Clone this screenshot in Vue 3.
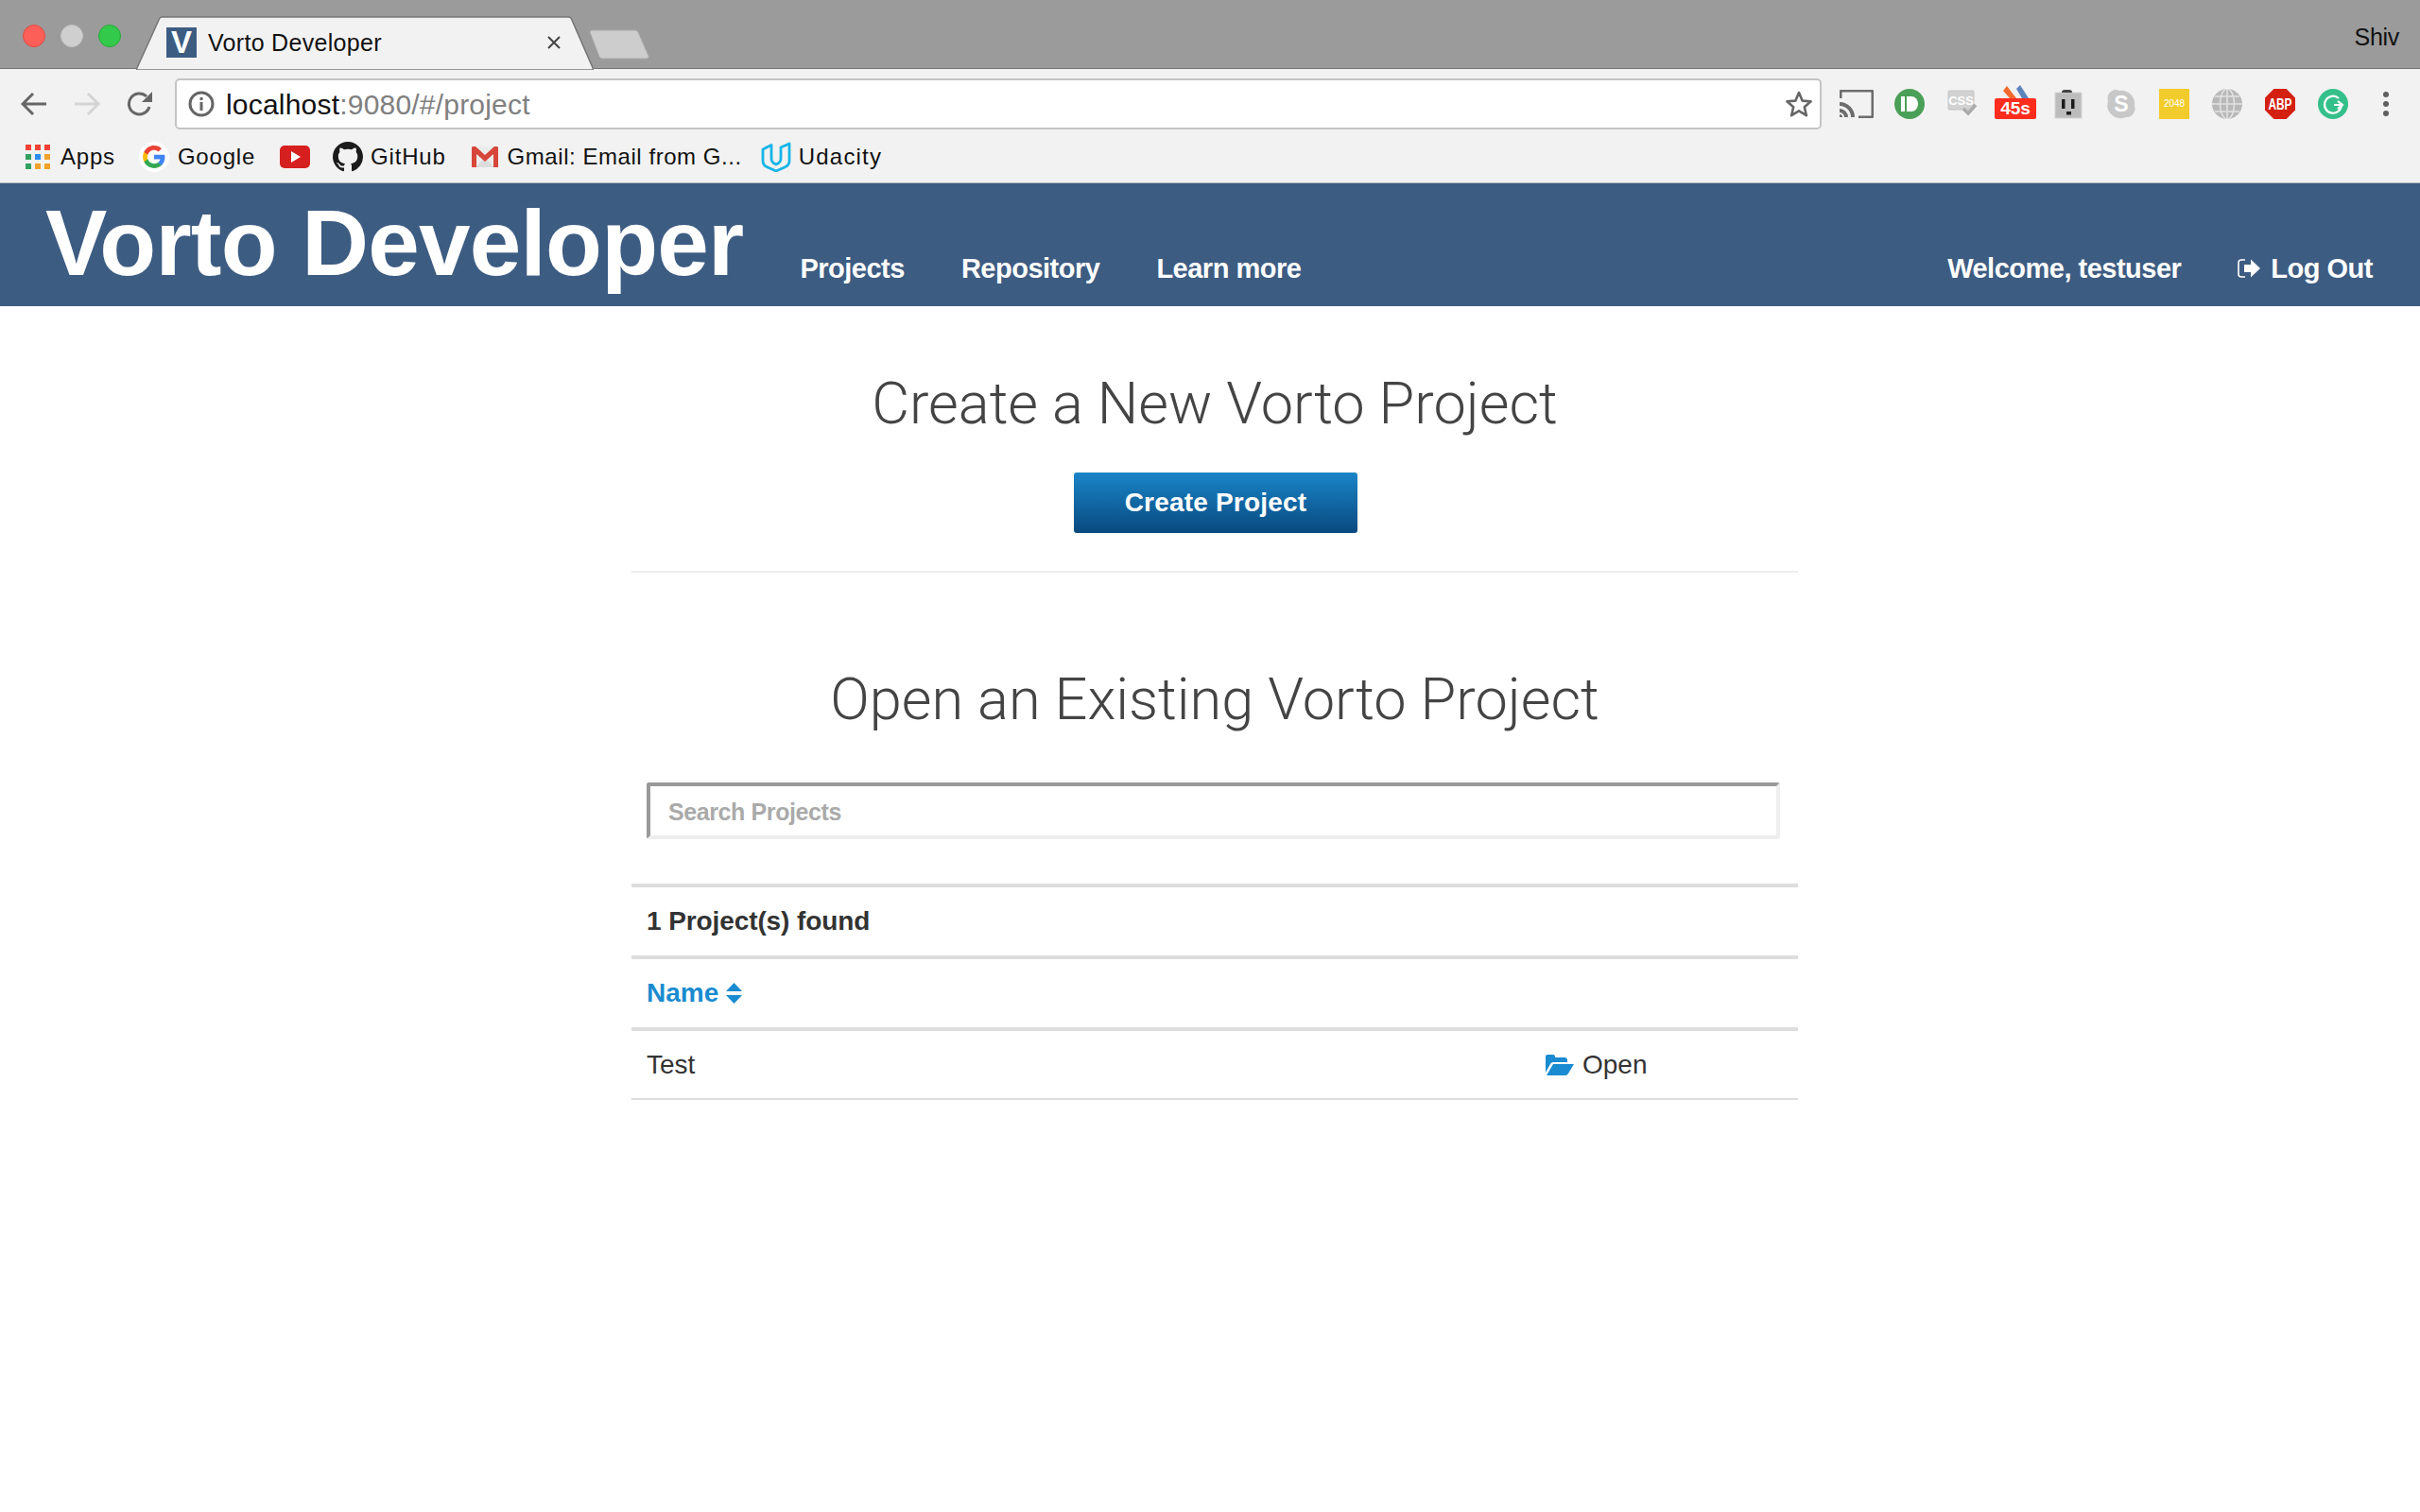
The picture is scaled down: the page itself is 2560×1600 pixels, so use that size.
<script setup>
const navLinks=['Projects','Repository','Learn more']
const projects=[{name:'Test'}]
</script>

<template>
  <div class="page">
    <div class="tabstrip">
      <div class="lights">
        <span class="light red"></span>
        <span class="light grey"></span>
        <span class="light green"></span>
      </div>
      <div class="tab">
        <svg class="tab_shape" width="484" height="57" viewBox="0 0 484 57">
          <path d="M0 57 L25 2 Q26 1 28 1 H457 Q459 1 460 2 L484 57 Z" fill="#f2f2f2" stroke="#777" stroke-width="1.5"/>
        </svg>
        <span class="favicon">V</span>
        <span class="tab_title">Vorto Developer</span>
        <svg class="tab_close" width="14" height="14" viewBox="0 0 14 14"><path d="M1 1 L13 13 M13 1 L1 13" stroke="#444" stroke-width="2"/></svg>
      </div>
      <svg class="newtab" width="66" height="32" viewBox="0 0 66 32">
        <path d="M2 3 Q2 1 4 1 H50 Q52 1 53 3 L64 28 Q65 31 62 31 H15 Q13 31 12 29 Z" fill="#cdcdcd" stroke="#aaa"/>
      </svg>
      <span class="profile">Shiv</span>
    </div>

    <div class="toolbar">
      <span class="slot">
        <svg width="28" height="26" viewBox="0 0 28 26"><path d="M27 13 H3 M13 2 L2 13 L13 24" fill="none" stroke="#666" stroke-width="3"/></svg>
      </span>
      <span class="slot">
        <svg width="28" height="26" viewBox="0 0 28 26"><path d="M1 13 H25 M15 2 L26 13 L15 24" fill="none" stroke="#d4d4d4" stroke-width="3"/></svg>
      </span>
      <span class="slot">
        <svg width="28" height="28" viewBox="0 0 28 28"><path d="M24 17 A11 11 0 1 1 21 6" fill="none" stroke="#666" stroke-width="3"/><path d="M27 1 V12 H16 Z" fill="#666"/></svg>
      </span>
      <div class="urlbox">
        <svg class="info" width="28" height="28" viewBox="0 0 28 28"><circle cx="14" cy="14" r="12" fill="none" stroke="#666" stroke-width="3"/><rect x="12.5" y="12" width="3" height="9" fill="#666"/><rect x="12.5" y="7" width="3" height="3" fill="#666"/></svg>
        <span class="url"><b>localhost</b>:9080/#/project</span>
        <svg class="star" width="30" height="30" viewBox="0 0 30 30"><path d="M15 3 L18.6 11.6 L27.6 12.3 L20.8 18.3 L22.9 27.2 L15 22.4 L7.100 27.2 L9.200 18.300 L2.400 12.300 L11.400 11.600 Z" fill="none" stroke="#666" stroke-width="2.600" stroke-linejoin="round"/></svg>
      </div>
      <div class="extensions">
        <span class="ext">
          <svg width="36" height="30" viewBox="0 0 36 30"><path d="M1 9 V3 Q1 1 3 1 H33 Q35 1 35 3 V27 Q35 29 33 29 H20" fill="none" stroke="#6d6d6d" stroke-width="3"/><path d="M0 13 A16 16 0 0 1 16 29 H12 A12 12 0 0 0 0 17 Z M0 20 A9 9 0 0 1 9 29 H5 A5 5 0 0 0 0 24 Z M0 26 A3 3 0 0 1 3 29 H0 Z" fill="#6d6d6d"/></svg>
        </span>
        <span class="ext">
          <svg width="32" height="32" viewBox="0 0 32 32"><circle cx="16" cy="16" r="16" fill="#4ba058"/><rect x="7" y="8" width="4" height="16" rx="0.500" fill="#fff"/><path d="M13 8 H18 A7 8 0 0 1 18 24 H13 Z" fill="#fff"/></svg>
        </span>
        <span class="ext">
          <svg width="32" height="30" viewBox="0 0 32 30"><path d="M1 2 Q1 1 2 1 H27 Q28 1 28 2 V20 Q28 21 27 21 H2 Q1 21 1 20 Z" fill="#d2d2d2" stroke="#c4c4c4"/><text x="14.500" y="16" class="svgtext" font-size="13" font-weight="700" fill="#fff" text-anchor="middle">CSS</text><path d="M17 20 L22 25 L30 16" fill="none" stroke="#aaa" stroke-width="3.500"/></svg>
        </span>
        <span class="ext">
          <svg width="46" height="42" viewBox="0 0 46 42"><path d="M10 7 L14 2 L24 15 H17 Z" fill="#f26a2e"/><path d="M24 5 L28 1 L37 15 H30 Z" fill="#5d83bd"/><rect x="1" y="15" width="44" height="22" rx="2" fill="#fd2d1e"/><text x="23" y="32" class="svgtext" font-size="19" font-weight="700" fill="#fff" text-anchor="middle">45s</text></svg>
        </span>
        <span class="ext">
          <svg width="30" height="32" viewBox="0 0 30 32"><rect x="1" y="4" width="28" height="27" fill="#bcbcbc" stroke="#d4d4d4"/><path d="M8 4 Q8 1 11 1 H16 Q19 1 19 4 Z" fill="#444"/><rect x="8" y="11" width="3.500" height="10" fill="#1c1c1c"/><rect x="18" y="11" width="3.500" height="10" fill="#1c1c1c"/><rect x="13" y="24" width="5" height="3.500" fill="#1c1c1c"/></svg>
        </span>
        <span class="ext">
          <svg width="32" height="32" viewBox="0 0 32 32"><path d="M10 1 A9 9 0 0 1 14 2 A14 14 0 0 1 30 18 A9 9 0 0 1 21 30 A14 14 0 0 1 2 13 A9 9 0 0 1 10 1 Z" fill="#c8c8c8"/><text x="16" y="24" class="svgtext" font-size="23" font-weight="700" fill="#fff" text-anchor="middle">S</text></svg>
        </span>
        <span class="ext">
          <span class="game">2048</span>
        </span>
        <span class="ext">
          <svg width="32" height="32" viewBox="0 0 32 32"><circle cx="16" cy="16" r="16" fill="#b9b9b9"/><g fill="none" stroke="#e2e2e2" stroke-width="1.500"><ellipse cx="16" cy="16" rx="7.500" ry="16"/><path d="M16 0 V32 M0 16 H32 M3 8 H29 M3 24 H29"/></g></svg>
        </span>
        <span class="ext">
          <svg width="32" height="32" viewBox="0 0 32 32"><path d="M9.400 0 H22.600 L32 9.400 V22.600 L22.600 32 H9.400 L0 22.600 V9.400 Z" fill="#d32011"/><text transform="translate(16 22) scale(.7 1)" class="svgtext" font-size="17" font-weight="700" fill="#fff" text-anchor="middle">ABP</text></svg>
        </span>
        <span class="ext">
          <svg width="32" height="32" viewBox="0 0 32 32"><circle cx="16" cy="16" r="16" fill="#35c08b"/><path d="M22 10 A9 9 0 1 0 25 17 H17" fill="none" stroke="#fff" stroke-width="2.200"/><path d="M21 13 L26 17 L21 21" fill="none" stroke="#fff" stroke-width="2.200"/></svg>
        </span>
        <span class="ext">
          <svg width="6" height="26" viewBox="0 0 6 26"><circle cx="3" cy="3" r="3" fill="#5f5f5f"/><circle cx="3" cy="13" r="3" fill="#5f5f5f"/><circle cx="3" cy="23" r="3" fill="#5f5f5f"/></svg>
        </span>
      </div>
    </div>

    <div class="bookmarks">
      <div class="mark">
        <svg width="26" height="26" viewBox="0 0 26 26">
          <rect width="6" height="6" fill="#f24236"/><rect x="10" width="6" height="6" fill="#f24236"/><rect x="20" width="6" height="6" fill="#f24236"/>
          <rect y="10" width="6" height="6" fill="#34a05f"/><rect x="10" y="10" width="6" height="6" fill="#2d8cf0"/><rect x="20" y="10" width="6" height="6" fill="#f2a22a"/>
          <rect y="20" width="6" height="6" fill="#34a05f"/><rect x="10" y="20" width="6" height="6" fill="#f2a22a"/><rect x="20" y="20" width="6" height="6" fill="#f2a22a"/>
        </svg>
        <span>Apps</span>
      </div>
      <div class="mark mark_goog">
        <span class="google">
          <svg width="26" height="26" viewBox="0 0 24 24">
            <path fill="#4285F4" d="M22.56 12.25c0-.78-.07-1.53-.2-2.25H12v4.26h5.92c-.26 1.37-1.04 2.53-2.21 3.31v2.77h3.57c2.08-1.92 3.28-4.74 3.28-8.09z"/>
            <path fill="#34A853" d="M12 23c2.97 0 5.46-.98 7.28-2.66l-3.57-2.77c-.98.66-2.23 1.06-3.71 1.06-2.86 0-5.29-1.93-6.16-4.53H2.18v2.84C3.99 20.53 7.7 23 12 23z"/>
            <path fill="#FBBC05" d="M5.84 14.09c-.22-.66-.35-1.36-.35-2.09s.13-1.43.35-2.09V7.07H2.18C1.43 8.55 1 10.22 1 12s.43 3.45 1.18 4.93l2.85-2.22.81-.62z"/>
            <path fill="#EA4335" d="M12 5.38c1.62 0 3.06.56 4.21 1.64l3.15-3.15C17.45 2.09 14.97 1 12 1 7.7 1 3.99 3.47 2.18 7.07l3.66 2.84c.87-2.6 3.3-4.53 6.16-4.53z"/>
          </svg>
        </span>
        <span>Google</span>
      </div>
      <div class="mark">
        <svg width="32" height="26" viewBox="0 0 32 26"><rect x="0" y="1" width="32" height="24" rx="5" fill="#d6201f"/><path d="M12 7 L22 13 L12 19 Z" fill="#fff"/></svg>
      </div>
      <div class="mark mark_git">
        <svg width="32" height="32" viewBox="0 0 16 16"><path fill="#1b1b1b" d="M8 0C3.58 0 0 3.58 0 8c0 3.54 2.29 6.53 5.47 7.59.4.07.55-.17.55-.38 0-.19-.01-.82-.01-1.49-2.01.37-2.53-.49-2.69-.94-.09-.23-.48-.94-.82-1.13-.28-.15-.68-.52-.01-.53.63-.01 1.08.58 1.23.82.72 1.21 1.87.87 2.33.66.07-.52.28-.87.51-1.07-1.78-.2-3.64-.89-3.64-3.95 0-.87.31-1.59.82-2.15-.08-.2-.36-1.02.08-2.12 0 0 .67-.21 2.2.82.64-.18 1.32-.27 2-.27.68 0 1.36.09 2 .27 1.53-1.04 2.2-.82 2.2-.82.44 1.1.16 1.92.08 2.12.51.56.82 1.27.82 2.15 0 3.07-1.87 3.75-3.65 3.95.29.25.54.73.54 1.48 0 1.07-.01 1.93-.01 2.2 0 .21.15.46.55.38A8.013 8.013 0 0016 8c0-4.42-3.58-8-8-8z"/></svg>
        <span>GitHub</span>
      </div>
      <div class="mark mark_gmail">
        <svg width="28" height="22" viewBox="0 0 28 22"><rect width="28" height="22" fill="#ececec"/><path d="M4 22 L14 12 L24 22 Z" fill="#dcdcdc"/><path d="M0 22 V1 Q0 0 2 0 H4 L14 9 L24 0 H26 Q28 0 28 1 V22 H23 V8 L14 16 L5 8 V22 Z" fill="#d7463a"/></svg>
        <span>Gmail: Email from G...</span>
      </div>
      <div class="mark mark_uda">
        <svg width="32" height="32" viewBox="0 0 32 32"><path d="M12 3 L2 8 V20 Q2 25 7 27 L16 31 L25 27 Q30 25 30 20 V2 L21 6 V18 Q21 22 16 24 Q11 22 11 18 V3" fill="none" stroke="#16b5e8" stroke-width="2.800" stroke-linejoin="round"/></svg>
        <span>Udacity</span>
      </div>
    </div>

    <nav class="topnav">
      <a class="brand">Vorto Developer</a>
      <a v-for="link in navLinks" :key="link" class="navlink">{{link}}</a>
      <div class="navright">
        <span class="navlink">Welcome, testuser</span>
        <a class="navlink logout">
          <svg width="25" height="22" viewBox="0 0 25 22"><path d="M8 2 H4 Q1 2 1 5 V17 Q1 20 4 20 H8" fill="none" stroke="#fff" stroke-width="1.600"/><path d="M7 7 H14 V1.500 L24 11 L14 20.500 V15 H7 Z" fill="#fff"/></svg>
          Log Out
        </a>
      </div>
    </nav>

    <main class="content">
      <section class="create">
        <h2>Create a New Vorto Project</h2>
        <button class="create_btn">Create Project</button>
      </section>
      <section class="existing">
        <h2>Open an Existing Vorto Project</h2>
        <div class="search_wrap">
          <input class="search" type="text" placeholder="Search Projects">
        </div>
        <div class="tbl">
          <div class="tbl_row tbl_found">1 Project(s) found</div>
          <div class="tbl_row tbl_head">
            Name
            <svg width="17" height="22" viewBox="0 0 17 22"><path d="M8.500 0 L17 9 H0 Z M0 13 H17 L8.500 22 Z" fill="#1a8bd0"/></svg>
          </div>
          <div v-for="p in projects" :key="p.name" class="tbl_row tbl_item">
            <span class="tbl_name">{{p.name}}</span>
            <a class="open">
              <svg width="30" height="22" viewBox="0 0 30 22"><path d="M0 2 Q0 0 2 0 H8 Q10 0 10 2 V3 H20 Q23 3 23 6 V8 H8 Q6 8 5 10 L0 19 Z" fill="#1a8bd0"/><path d="M8 10 H30 L24 20 Q23 22 21 22 H1 Z" fill="#1a8bd0"/></svg>
              Open
            </a>
          </div>
        </div>
      </section>
    </main>
  </div>
</template>

<style scoped>
.page{
  width: 2560px;
  min-height: 1600px;
  background: #fff;
  font-family: "Liberation Sans", Arial, sans-serif;
}
.tabstrip{
  display: flex;
  align-items: flex-end;
  height: 73px;
  padding-left: 24px;
  background: #9b9b9b;
  box-sizing: border-box;
  border-bottom: 1px solid #777;
  position: relative;
}
.lights{
  display: flex;
  gap: 16px;
  align-self: flex-start;
  margin-top: 26px;
}
.light{
  width: 24px;
  height: 24px;
  border-radius: 50%;
  box-sizing: border-box;
}
.red{background:#fc5f58;border:1px solid #e04b44;}
.grey{background:#cfcfcf;border:1px solid #c2c2c2;}
.green{background:#33c94a;border:1px solid #29a83c;}
.tab{
  position: relative;
  display: flex;
  align-items: center;
  width: 484px;
  height: 56px;
  margin-left: 16px;
  margin-bottom: -1px;
  padding-left: 32px;
  box-sizing: border-box;
}
.tab_shape{
  position: absolute;
  left: 0;
  top: 0;
}
.favicon{
  position: relative;
  width: 32px;
  height: 32px;
  background: #3d5c82;
  color: #fff;
  font-weight: 700;
  font-size: 33px;
  line-height: 32px;
  text-align: center;
}
.tab_title{
  position: relative;
  margin-left: 12px;
  margin-top: 1px;
  font-size: 25px;
  letter-spacing: 0.3px;
  color: #111;
}
.tab_close{
  position: absolute;
  left: 435px;
  top: 21px;
}
.newtab{
  margin-left: -6px;
  margin-bottom: 9px;
}
.profile{
  position: absolute;
  right: 22px;
  top: 25px;
  font-size: 25px;
  letter-spacing: -0.3px;
  color: #111;
}
.toolbar{
  display: flex;
  align-items: center;
  height: 74px;
  padding-left: 8px;
  background: #f2f2f2;
  box-sizing: border-box;
}
.slot{
  display: flex;
  align-items: center;
  justify-content: center;
  width: 56px;
}
.urlbox{
  display: flex;
  align-items: center;
  width: 1742px;
  height: 54px;
  margin-left: 9px;
  padding: 0 12px;
  background: #fff;
  border: 2px solid #c4c4c4;
  border-radius: 5px;
  box-sizing: border-box;
}
.info{flex:none;}
.url{
  margin-left: 12px;
  margin-top: 2px;
  font-size: 30px;
  letter-spacing: 0.2px;
  color: #808080;
}
.url b{
  font-weight: 400;
  color: #111;
}
.star{
  margin-left: auto;
  margin-right: -5px;
}
.extensions{
  display: flex;
  margin-left: 9px;
}
.ext{
  display: flex;
  align-items: center;
  justify-content: center;
  width: 56px;
  height: 42px;
}
.svgtext{
  font-family: "Liberation Sans", Arial, sans-serif;
}
.game{
  width: 32px;
  height: 32px;
  background: #f2cb2d;
  color: #fff;
  font-size: 10px;
  line-height: 32px;
  text-align: center;
}
.bookmarks{
  display: flex;
  align-items: center;
  gap: 26px;
  height: 47px;
  padding: 0 0 8px 27px;
  background: #f2f2f2;
  border-bottom: 1px solid #bbb;
  box-sizing: border-box;
}
.mark{
  display: flex;
  align-items: center;
  gap: 11px;
  font-size: 24px;
  color: #111;
  letter-spacing: 0.8px;
}
.mark svg{flex:none;}
.mark_goog{gap: 9px; margin-left: -1px;}
.mark_git{gap: 8px; margin-left: -2px;}
.mark_gmail{gap: 10px; margin-left: 1px; letter-spacing: 0.55px;}
.mark_uda{gap: 8px; margin-left: -6px; letter-spacing: 1.2px;}
.google{
  display: flex;
  align-items: center;
  justify-content: center;
  width: 32px;
  height: 32px;
  background: #fff;
  border-radius: 50%;
}
.topnav{
  display: flex;
  align-items: flex-end;
  gap: 60px;
  height: 130px;
  padding: 0 50px 0 48px;
  background: #3d5c82;
  box-sizing: border-box;
  color: #fff;
}
.brand{
  position: relative;
  top: -2px;
  height: 130px;
  font-size: 98px;
  font-weight: 700;
  line-height: 130px;
  letter-spacing: -0.75px;
}
.navlink{
  display: inline-flex;
  align-items: center;
  gap: 10px;
  font-size: 29px;
  font-weight: 700;
  line-height: 40px;
  letter-spacing: -0.5px;
  margin-bottom: 20px;
  color: #fff;
}
.navright{
  display: flex;
  gap: 60px;
  margin-left: auto;
}
.content{
  width: 1234px;
  margin: 0 auto;
  position: relative;
  left: 5px;
}
h2{
  margin: 0;
  font-family: Roboto, "Liberation Sans", sans-serif;
  font-size: 61.3px;
  font-weight: 300;
  line-height: 70px;
  color: #444;
  text-align: center;
}
.create{
  display: flex;
  flex-direction: column;
  align-items: center;
  padding-top: 68px;
  padding-bottom: 40px;
  border-bottom: 2px solid #eee;
}
.create_btn{
  width: 300px;
  height: 64px;
  margin-top: 38px;
  margin-left: 2px;
  background: linear-gradient(#1a85c8,#09497f);
  border: none;
  border-radius: 3px;
  color: #fff;
  font-family: inherit;
  font-size: 28px;
  font-weight: 700;
  letter-spacing: 0.2px;
}
.existing{
  padding-top: 99px;
}
.search_wrap{
  margin-top: 53px;
  padding: 0 19px 0 16px;
}
.search{
  display: block;
  width: 100%;
  height: 60px;
  padding: 2px 19px 0;
  border: 4px solid #eee;
  border-top-color: #999;
  border-left-color: #999;
  border-radius: 3px;
  box-sizing: border-box;
  font-family: inherit;
  font-size: 25px;
  font-weight: 700;
  letter-spacing: -0.4px;
  outline: none;
}
.search::placeholder{
  color: #aaa;
  opacity: 1;
}
.tbl{
  margin-top: 47px;
  border-top: 4px solid #ddd;
}
.tbl_row{
  display: flex;
  align-items: center;
  height: 72px;
  padding-left: 16px;
  border-bottom: 4px solid #ddd;
  font-size: 28px;
}
.tbl_row.tbl_item{
  height: 71px;
  border-bottom-width: 2px;
}
.tbl_found{
  font-weight: 700;
  letter-spacing: -0.1px;
  color: #333;
}
.tbl_head{
  gap: 8px;
  font-weight: 700;
  color: #1a8bd0;
}
.tbl_name{
  width: 951px;
  color: #333;
}
.open{
  display: inline-flex;
  align-items: center;
  gap: 9px;
  color: #333;
}
</style>

<style>
html,body{background:#fff;}
</style>
